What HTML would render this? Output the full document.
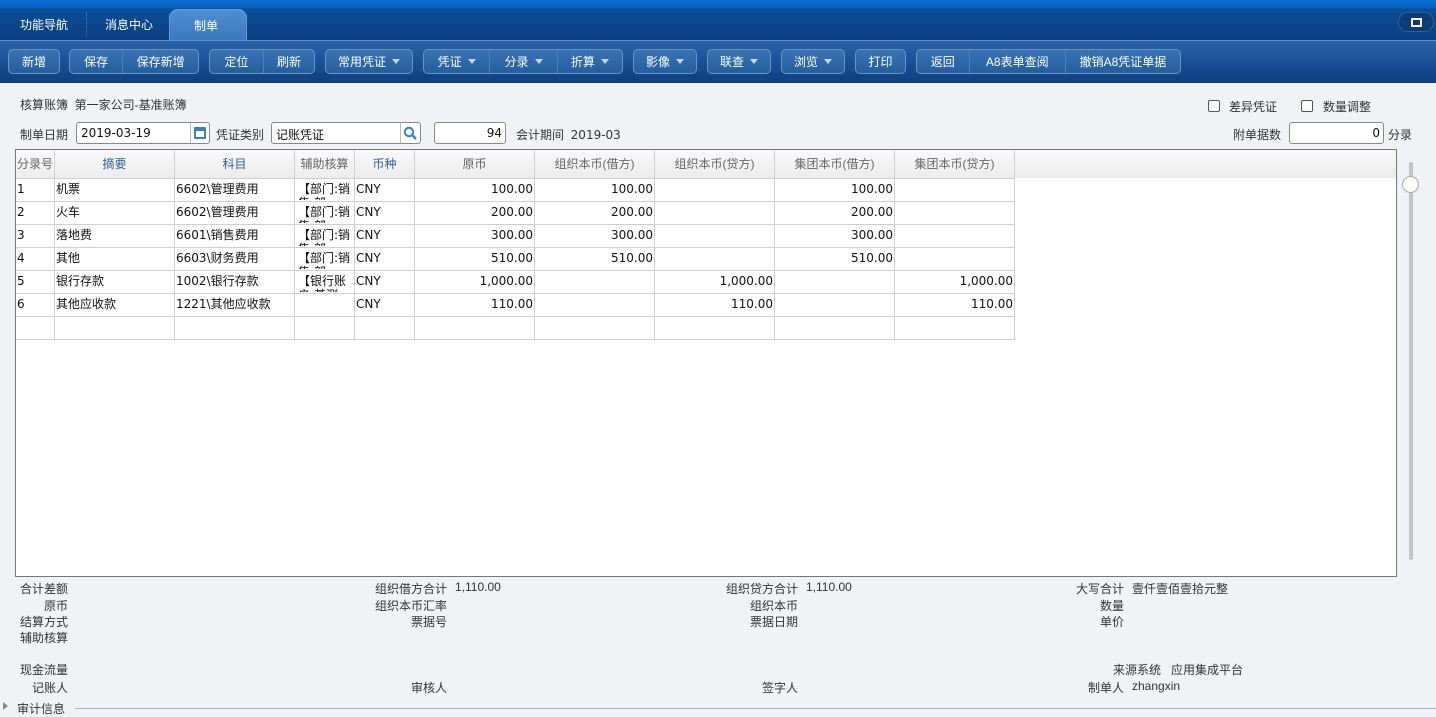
<!DOCTYPE html>
<html><head><meta charset="utf-8">
<style>
*{margin:0;padding:0;box-sizing:border-box}
body{width:1436px;height:710px;overflow:hidden;background:#f1f2f6;font-family:"Liberation Sans","Noto Sans CJK SC",sans-serif;font-size:12px;color:#333;position:relative}
.a{position:absolute;white-space:nowrap}
.dv{font-family:"DejaVu Sans","Noto Sans CJK SC",sans-serif}
#top{position:absolute;left:0;top:0;width:1436px;height:40px;background:linear-gradient(#0a6fd6 0,#0a62c4 7px,#0b4e98 9px,#0a3f7f 40px)}
.tab{position:absolute;top:16px;color:#fff;font-size:12px}
#act{position:absolute;left:169px;top:9px;width:78px;height:32px;border-radius:9px 9px 0 0;background:linear-gradient(#4f8ed0,#3a78bd);border:1px solid #6aa0d8;border-bottom:none}
#tb{position:absolute;left:0;top:40px;width:1436px;height:43px;background:linear-gradient(#2a64a8,#154d92 60%,#0d3f7f);border-top:1px solid #5d8fcb}
.g{position:absolute;top:8px;height:25px;border:1px solid #6b94c4;border-radius:5px;background:linear-gradient(#3a73b3,#235e9f);display:flex}
.g span{color:#fff;display:flex;align-items:center;justify-content:center;height:100%;border-left:1px solid #4e7fb8}
.g span:first-child{border-left:none}
.tri{display:inline-block;width:0;height:0;border-left:4px solid transparent;border-right:4px solid transparent;border-top:5px solid #c8d6ea;margin-left:6px}
.inp{position:absolute;height:22px;background:#fff;border:1px solid #888;border-radius:3px}
.cb{position:absolute;width:12px;height:12px;border:1px solid #555;border-radius:2px;background:#fff}
#grid{position:absolute;left:15px;top:149px;width:1382px;height:428px;border:1px solid #777;background:#fff;overflow:hidden}
table{border-collapse:collapse;position:absolute;left:-4px;top:-1px;table-layout:fixed}
td{border:1px solid #d0d0d0;height:23px;padding:0 1px;vertical-align:top;font-size:12px;color:#111;overflow:hidden;white-space:nowrap;line-height:14px;font-family:"DejaVu Sans","Noto Sans CJK SC",sans-serif}
td div{height:21px;overflow:hidden;padding-top:3px}
td.f div{padding-left:3px}
th{height:29px;border:1px solid #d0d0d0;border-top:none;background:linear-gradient(#fafafa,#ececec);font-weight:normal;color:#666;font-size:12px}
th.f{padding-left:3px}
th.b{color:#2f5f9f}
td.r{text-align:right}
td.w div{white-space:normal;padding-left:2px}
.lb{position:absolute;text-align:right;white-space:nowrap}
</style></head><body>
<div id="top">
<div class="tab" style="left:20px">功能导航</div>
<div style="position:absolute;left:86px;top:12px;height:24px;border-left:1px dotted #4f7fb5"></div>
<div class="tab" style="left:105px">消息中心</div>
<div id="act"><span class="a" style="left:24px;top:7px;color:#fff">制单</span></div>
<div style="position:absolute;left:1398px;top:12px;width:36px;height:20px;border-radius:10px;background:#0c3b75;border:1px solid #2e5e99"><div style="position:absolute;left:12px;top:5px;width:11px;height:9px;border:2px solid #fff"></div></div>
</div>
<div id="tb">
<div class="g" style="left:8px;width:52px"><span style="width:52px">新增</span></div>
<div class="g" style="left:69px;width:130px"><span style="width:53px">保存</span><span style="width:77px">保存新增</span></div>
<div class="g" style="left:209px;width:106px"><span style="width:54px">定位</span><span style="width:52px">刷新</span></div>
<div class="g" style="left:325px;width:88px"><span style="width:88px">常用凭证<i class="tri"></i></span></div>
<div class="g" style="left:423px;width:200px"><span style="width:66px">凭证<i class="tri"></i></span><span style="width:68px">分录<i class="tri"></i></span><span style="width:66px">折算<i class="tri"></i></span></div>
<div class="g" style="left:633px;width:64px"><span style="width:64px">影像<i class="tri"></i></span></div>
<div class="g" style="left:707px;width:64px"><span style="width:64px">联查<i class="tri"></i></span></div>
<div class="g" style="left:781px;width:64px"><span style="width:64px">浏览<i class="tri"></i></span></div>
<div class="g" style="left:855px;width:51px"><span style="width:51px">打印</span></div>
<div class="g" style="left:916px;width:265px"><span style="width:52px">返回</span><span style="width:97px">A8表单查阅</span><span style="width:116px">撤销A8凭证单据</span></div>
</div>

<div class="a" style="left:20px;top:96px">核算账簿&nbsp;&nbsp;第一家公司-基准账簿</div>
<div class="a" style="left:20px;top:126px">制单日期</div>
<div class="inp" style="left:76px;top:122px;width:134px"><span class="a dv" style="left:4px;top:3px;color:#111">2019-03-19</span><div style="position:absolute;left:113px;top:0;height:20px;border-left:1px solid #bbb"></div><div style="position:absolute;left:117px;top:4px;width:12px;height:12px;border:2px solid #3d7cc0;border-top-width:4px;border-radius:1px"></div></div>
<div class="a" style="left:216px;top:126px">凭证类别</div>
<div class="inp" style="left:271px;top:122px;width:150px"><span class="a" style="left:4px;top:3px;color:#111">记账凭证</span><div style="position:absolute;left:128px;top:0;height:20px;border-left:1px solid #bbb"></div>
<svg style="position:absolute;left:131px;top:3px" width="15" height="15"><circle cx="6" cy="6" r="4.2" fill="none" stroke="#3d7cc0" stroke-width="2"/><path d="M9 9l4 4" stroke="#3d7cc0" stroke-width="2.4"/></svg></div>
<div class="inp" style="left:434px;top:122px;width:72px"><span class="a dv" style="right:3px;top:3px;color:#111">94</span></div>
<div class="a" style="left:516px;top:126px">会计期间&nbsp;&nbsp;<span class="dv">2019-03</span></div>
<div class="cb" style="left:1208px;top:100px"></div><div class="a" style="left:1229px;top:98px">差异凭证</div>
<div class="cb" style="left:1301px;top:100px"></div><div class="a" style="left:1323px;top:98px">数量调整</div>
<div class="a" style="left:1233px;top:126px">附单据数</div>
<div class="inp" style="left:1289px;top:122px;width:95px"><span class="a dv" style="right:3px;top:3px;color:#111">0</span></div>
<div class="a" style="left:1388px;top:126px">分录</div>

<div id="grid">
<div style="position:absolute;left:0;top:0;width:1380px;height:28px;background:linear-gradient(#fafafa,#ececec)"></div>
<table>
<colgroup><col style="width:42px"><col style="width:120px"><col style="width:120px"><col style="width:60px"><col style="width:60px"><col style="width:120px"><col style="width:120px"><col style="width:120px"><col style="width:120px"><col style="width:120px"></colgroup>
<tr><th class="f">分录号</th><th class="b">摘要</th><th class="b">科目</th><th>辅助核算</th><th class="b">币种</th><th>原币</th><th>组织本币(借方)</th><th>组织本币(贷方)</th><th>集团本币(借方)</th><th>集团本币(贷方)</th></tr>
<tr><td class="f"><div>1</div></td><td><div>机票</div></td><td><div>6602\管理费用</div></td><td class="w"><div>【部门:销售 部</div></td><td><div>CNY</div></td><td class="r"><div>100.00</div></td><td class="r"><div>100.00</div></td><td></td><td class="r"><div>100.00</div></td><td></td></tr>
<tr><td class="f"><div>2</div></td><td><div>火车</div></td><td><div>6602\管理费用</div></td><td class="w"><div>【部门:销售 部</div></td><td><div>CNY</div></td><td class="r"><div>200.00</div></td><td class="r"><div>200.00</div></td><td></td><td class="r"><div>200.00</div></td><td></td></tr>
<tr><td class="f"><div>3</div></td><td><div>落地费</div></td><td><div>6601\销售费用</div></td><td class="w"><div>【部门:销售 部</div></td><td><div>CNY</div></td><td class="r"><div>300.00</div></td><td class="r"><div>300.00</div></td><td></td><td class="r"><div>300.00</div></td><td></td></tr>
<tr><td class="f"><div>4</div></td><td><div>其他</div></td><td><div>6603\财务费用</div></td><td class="w"><div>【部门:销售 部</div></td><td><div>CNY</div></td><td class="r"><div>510.00</div></td><td class="r"><div>510.00</div></td><td></td><td class="r"><div>510.00</div></td><td></td></tr>
<tr><td class="f"><div>5</div></td><td><div>银行存款</div></td><td><div>1002\银行存款</div></td><td class="w"><div>【银行账户:基测</div></td><td><div>CNY</div></td><td class="r"><div>1,000.00</div></td><td></td><td class="r"><div>1,000.00</div></td><td></td><td class="r"><div>1,000.00</div></td></tr>
<tr><td class="f"><div>6</div></td><td><div>其他应收款</div></td><td><div>1221\其他应收款</div></td><td></td><td><div>CNY</div></td><td class="r"><div>110.00</div></td><td></td><td class="r"><div>110.00</div></td><td></td><td class="r"><div>110.00</div></td></tr>
<tr><td></td><td></td><td></td><td></td><td></td><td></td><td></td><td></td><td></td><td></td></tr>
</table>
</div>
<div style="position:absolute;left:1409px;top:162px;width:4px;height:398px;background:#c4c4c8;border-radius:2px"></div>
<div style="position:absolute;left:1402px;top:176px;width:17px;height:17px;border-radius:50%;background:#fff;border:1px solid #aaa"></div>

<div class="lb" style="right:1368px;top:580px">合计差额</div>
<div class="lb" style="right:1368px;top:597px">原币</div>
<div class="lb" style="right:1368px;top:613px">结算方式</div>
<div class="lb" style="right:1368px;top:629px">辅助核算</div>
<div class="lb" style="right:1368px;top:661px">现金流量</div>
<div class="lb" style="right:1368px;top:679px">记账人</div>
<div class="lb" style="right:989px;top:580px">组织借方合计</div><div class="a" style="left:455px;top:580px">1,110.00</div>
<div class="lb" style="right:989px;top:597px">组织本币汇率</div>
<div class="lb" style="right:989px;top:613px">票据号</div>
<div class="lb" style="right:989px;top:679px">审核人</div>
<div class="lb" style="right:638px;top:580px">组织贷方合计</div><div class="a" style="left:806px;top:580px">1,110.00</div>
<div class="lb" style="right:638px;top:597px">组织本币</div>
<div class="lb" style="right:638px;top:613px">票据日期</div>
<div class="lb" style="right:638px;top:679px">签字人</div>
<div class="lb" style="right:312px;top:580px">大写合计</div><div class="a" style="left:1132px;top:580px">壹仟壹佰壹拾元整</div>
<div class="lb" style="right:312px;top:597px">数量</div>
<div class="lb" style="right:312px;top:613px">单价</div>
<div class="lb" style="right:275px;top:661px">来源系统</div><div class="a" style="left:1171px;top:661px">应用集成平台</div>
<div class="lb" style="right:312px;top:679px">制单人</div><div class="a" style="left:1132px;top:679px">zhangxin</div>
<div style="position:absolute;left:3px;top:702px;width:0;height:0;border-top:4px solid transparent;border-bottom:4px solid transparent;border-left:5px solid #888"></div>
<div class="a" style="left:17px;top:700px">审计信息</div>
<div style="position:absolute;left:75px;top:708px;width:1361px;border-top:1px solid #a8b0bc"></div>
</body></html>
